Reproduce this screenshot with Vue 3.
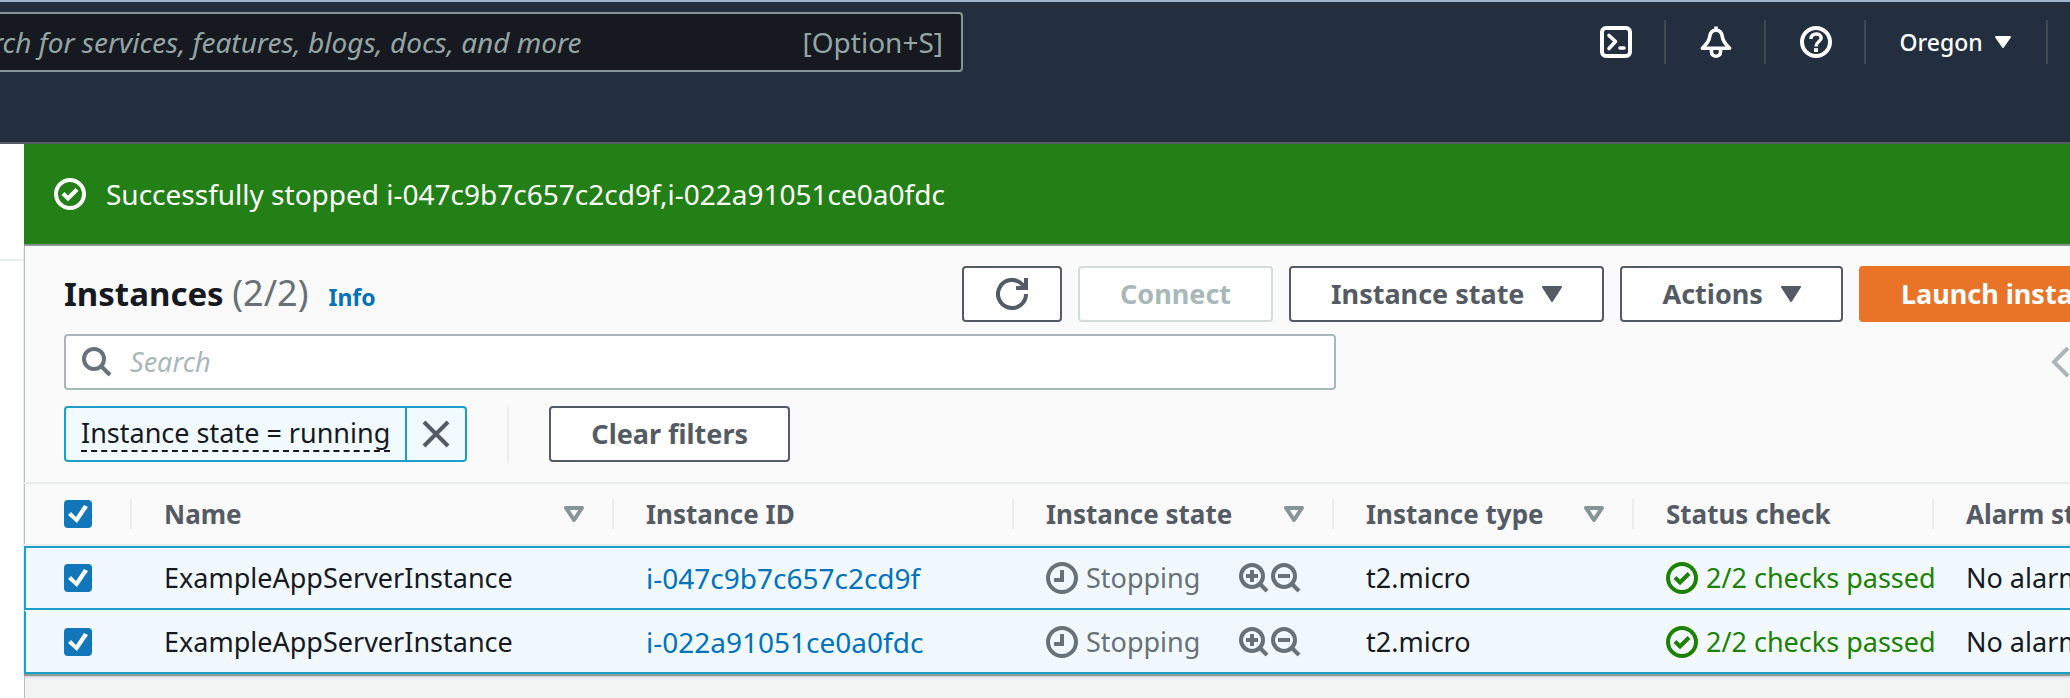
<script setup>
import { ref } from 'vue'

const columns = [
  { label: 'Name', cls: 'c-name', sort: true },
  { label: 'Instance ID', cls: 'c-id', sort: false },
  { label: 'Instance state', cls: 'c-state', sort: true },
  { label: 'Instance type', cls: 'c-type', sort: true },
  { label: 'Status check', cls: 'c-check', sort: false },
  { label: 'Alarm status', cls: 'c-alarm', sort: false },
]
const rows = ref([
  { id: 'i-047c9b7c657c2cd9f', name: 'ExampleAppServerInstance', selected: true },
  { id: 'i-022a91051ce0a0fdc', name: 'ExampleAppServerInstance', selected: true },
])
const all = ref(true)
</script>

<template>
  <div class="page">
    <header class="nav">
      <label class="nav-search">
        <input type="text" placeholder="Search for services, features, blogs, docs, and more" aria-label="Search for services" />
        <span class="hint">[Option+S]</span>
      </label>
      <div class="nav-tools">
        <button class="tool" type="button" aria-label="CloudShell">
          <svg width="32" height="32" viewBox="0 0 32 32" fill="none" stroke="#fff" stroke-width="4" stroke-linejoin="round">
            <rect x="2" y="2" width="28" height="28" rx="4" />
            <path d="M9 9.500L15.500 15.500L9 22.500" stroke-linecap="round" stroke-width="3.600" />
            <path d="M20 22h4" stroke-linecap="round" stroke-width="3.600" />
          </svg>
        </button>
        <button class="tool" type="button" aria-label="Notifications">
          <svg width="32" height="32" viewBox="0 0 32 32" fill="none" stroke="#fff" stroke-width="3.600" stroke-linejoin="round">
            <path d="M16 4.200C11.500 4.200 10 7.500 9.600 11C9 15.800 6 18.800 2.400 22.200H29.600C26 18.800 23 15.800 22.400 11C22 7.500 20.500 4.200 16 4.200Z" />
            <path d="M16 0.500V4" />
            <path d="M11.500 23V26C11.500 31.600 20.500 31.600 20.500 26V23" />
          </svg>
        </button>
        <button class="tool" type="button" aria-label="Help">
          <svg width="32" height="32" viewBox="0 0 32 32" fill="none" stroke="#fff" stroke-width="4">
            <circle cx="16" cy="16" r="14" />
            <path d="M11 13V12.500C11 6.500 21.200 6.500 21.200 12C21.200 15.500 16 15.800 16 20.500" stroke-width="3.400" />
            <path d="M16 22.200v3.800" />
          </svg>
        </button>
        <button class="tool region" type="button">
          Oregon
          <svg width="16" height="12" viewBox="0 0 16 12"><path d="M1 1H15L8 11Z" fill="#fff" stroke="#fff" stroke-width="2" stroke-linejoin="round" /></svg>
        </button>
      </div>
    </header>

    <div class="body">
      <aside class="side"><div class="side-line"></div></aside>
      <main class="main">
        <div class="flash" role="status">
          <svg width="32" height="32" viewBox="0 0 32 32" fill="none" stroke="#fff" stroke-width="4">
            <circle cx="16" cy="16" r="14" /><path d="M9 15.500L14 20.500L23 11.500" />
          </svg>
          <span>Successfully stopped i-047c9b7c657c2cd9f,i-022a91051ce0a0fdc</span>
        </div>

        <section class="panel">
          <div class="head">
            <div class="title">
              <h1>Instances <span>(2/2)</span></h1>
              <a href="#info">Info</a>
            </div>
            <div class="actions">
              <button class="btn icon-btn" type="button" aria-label="Refresh">
                <svg width="32" height="32" viewBox="0 0 32 32" fill="none" stroke="#545b64" stroke-width="4">
                  <path d="M30 16A14 14 0 1 1 26 6.200L29 9.500" /><path d="M30 0V10H20" />
                </svg>
              </button>
              <button class="btn" type="button" disabled>Connect</button>
              <button class="btn" type="button">
                Instance state
                <svg class="caret" width="20" height="16" viewBox="0 0 20 16"><path d="M1 1H19L10 15Z" fill="#545b64" stroke="#545b64" stroke-width="2" stroke-linejoin="round" /></svg>
              </button>
              <button class="btn" type="button">
                Actions
                <svg class="caret" width="20" height="16" viewBox="0 0 20 16"><path d="M1 1H19L10 15Z" fill="#545b64" stroke="#545b64" stroke-width="2" stroke-linejoin="round" /></svg>
              </button>
              <button class="btn primary" type="button">Launch instances</button>
            </div>
          </div>

          <div class="filter">
            <label class="search">
              <svg width="30" height="30" viewBox="0 0 30 30" fill="none" stroke="#687078" stroke-width="4">
                <circle cx="12" cy="12" r="10" /><path d="M19 19L28 28" />
              </svg>
              <input type="search" placeholder="Search" aria-label="Search instances" />
            </label>
            <button class="prev" type="button" aria-label="Previous page">
              <svg width="20" height="32" viewBox="0 0 20 32" fill="none" stroke="#aab7b8" stroke-width="4"><path d="M18 2L4 16L18 30" /></svg>
            </button>
          </div>

          <div class="tokens">
            <div class="token">
              <div class="token-text"><button type="button">Instance state = running</button></div>
              <button class="dismiss" type="button" aria-label="Remove filter">
                <svg width="28" height="28" viewBox="0 0 28 28" fill="none" stroke="#545b64" stroke-width="4"><path d="M2 2L26 26M26 2L2 26" /></svg>
              </button>
            </div>
            <div class="rule"></div>
            <button class="btn" type="button">Clear filters</button>
          </div>

          <table>
            <colgroup>
              <col class="c-box" />
              <col v-for="c in columns" :key="c.label" :class="c.cls" />
            </colgroup>
            <thead>
              <tr>
                <th class="box"><div class="th"><input v-model="all" type="checkbox" aria-label="Select all" /></div></th>
                <th v-for="c in columns" :key="c.label" scope="col">
                  <div class="th">
                    <span>{{ c.label }}</span>
                    <svg v-if="c.sort" width="20" height="16" viewBox="0 0 20 16" fill="none"><path d="M2 2H18L10 14Z" stroke="#879596" stroke-width="4" stroke-linejoin="round" /></svg>
                  </div>
                </th>
              </tr>
            </thead>
            <tbody>
              <tr v-for="r in rows" :key="r.id">
                <td class="box"><input v-model="r.selected" type="checkbox" :aria-label="'Select ' + r.id" /></td>
                <td>{{ r.name }}</td>
                <td class="id"><a :href="'#' + r.id">{{ r.id }}</a></td>
                <td>
                  <div class="cell state">
                    <svg width="32" height="32" viewBox="0 0 32 32" fill="none" stroke="#687078" stroke-width="4">
                      <circle cx="16" cy="16" r="14" /><path d="M16 8V18H8" />
                    </svg>
                    <span>Stopping</span>
                    <div class="zoom">
                      <button type="button" aria-label="Include this value">
                        <svg width="30" height="30" viewBox="0 0 30 30" fill="none" stroke="#687078" stroke-width="4">
                          <circle cx="13" cy="13" r="11" /><path d="M7 13H19M13 7V19M21 21L28 28" />
                        </svg>
                      </button>
                      <button type="button" aria-label="Exclude this value">
                        <svg width="30" height="30" viewBox="0 0 30 30" fill="none" stroke="#687078" stroke-width="4">
                          <circle cx="13" cy="13" r="11" /><path d="M7 13H19M21 21L28 28" />
                        </svg>
                      </button>
                    </div>
                  </div>
                </td>
                <td>t2.micro</td>
                <td class="clip">
                  <div class="cell passed">
                    <svg width="32" height="32" viewBox="0 0 32 32" fill="none" stroke="#1d8102" stroke-width="4">
                      <circle cx="16" cy="16" r="14" /><path d="M9 15.500L14 20.500L23 11.500" />
                    </svg>
                    <span>2/2 checks passed</span>
                  </div>
                </td>
                <td>No alarms</td>
              </tr>
            </tbody>
          </table>
        </section>
      </main>
    </div>
  </div>
</template>

<style>
html, body { margin: 0; background: #f2f3f3; }
</style>

<style scoped>
* { box-sizing: border-box; }
.page {
  min-height: 100vh;
  display: flex;
  flex-direction: column;
  overflow: hidden;
  font-family: "Noto Sans", "Open Sans", sans-serif;
  font-size: 27px;
  line-height: 40px;
  color: #16191f;
}
button, input { font: inherit; color: inherit; margin: 0; }
button { padding: 0; border: 0; background: none; white-space: nowrap; cursor: pointer; }
svg { display: block; flex: none; }
a { color: #0073bb; text-decoration: none; }

.nav {
  display: flex;
  align-items: flex-start;
  justify-content: space-between;
  height: 144px;
  background: #232f3e;
  border-top: 2px solid #a2b5cd;
  border-bottom: 2px solid #545b64;
}
.nav-search {
  display: flex;
  align-items: center;
  width: 1063px;
  height: 60px;
  margin: 10px 0 0 -100px;
  padding-right: 18px;
  background: #16191f;
  border: 2px solid #879596;
  border-radius: 4px;
  color: #95a5a6;
  font-size: 28px;
}
.nav-search input { flex: 1; min-width: 0; padding: 0 0 0 46px; border: 0; outline: 0; background: none; }
.nav-search input::placeholder { color: #95a5a6; font-style: italic; opacity: 1; }
.nav-tools { display: flex; padding-top: 18px; margin-right: 22px; }
.tool {
  display: flex;
  align-items: center;
  justify-content: center;
  width: 100px;
  height: 44px;
  padding-left: 2px;
  border-right: 2px solid #414750;
}
.region { width: 182px; gap: 12px; padding: 0 2px 0 0; font-size: 23px; font-weight: 500; color: #fff; }

.body { flex: 1; display: flex; }
.side { flex: none; width: 24px; padding-top: 115px; background: #fff; box-shadow: 1px 0 0 #b5bdbd; }
.side-line { height: 2px; background: #eaeded; }
.main { flex: 1; min-width: 0; }
.flash {
  display: flex;
  align-items: center;
  gap: 20px;
  height: 102px;
  padding: 0 30px;
  background: #238016;
  border-bottom: 2px solid #879596;
  color: #fff;
  font-size: 28px;
}
.panel {
  background: #fafafa;
  border-bottom: 2px solid #8d9999;
  box-shadow: inset 1px 0 0 #b5bdbd, 0 1px 2px #c4cbcb;
}
.head { display: flex; align-items: center; padding: 20px 0 12px 40px; }
.title { flex: none; width: 898px; display: flex; align-items: baseline; gap: 20px; }
.title h1 { margin: 0; font-size: 33px; line-height: 44px; font-weight: 700; }
.title h1 span { font-size: 36px; font-weight: 400; color: #687078; }
.title a { font-size: 23px; font-weight: 700; }
.actions { display: flex; gap: 16px; }
.btn {
  display: flex;
  flex: none;
  align-items: center;
  justify-content: center;
  gap: 18px;
  height: 56px;
  padding: 0 40px;
  background: #fff;
  border: 2px solid #545b64;
  border-radius: 4px;
  color: #545b64;
  font-weight: 700;
}
.btn:disabled { border-color: #d5dbdb; color: #aab7b8; }
.icon-btn { padding: 0 32px; }
.primary { background: #e97327; border-color: #e97327; color: #fff; }

.filter { display: flex; align-items: center; justify-content: space-between; padding-left: 40px; }
.search {
  display: flex;
  align-items: center;
  gap: 18px;
  width: 1272px;
  height: 56px;
  padding: 0 16px;
  background: #fff;
  border: 2px solid #aab7b8;
  border-radius: 4px;
}
.search input { flex: 1; min-width: 0; padding: 0; border: 0; outline: 0; background: none; }
.search input::placeholder { color: #aab7b8; font-style: italic; opacity: 1; }

.tokens { display: flex; align-items: stretch; padding: 16px 0 20px 40px; }
.token {
  display: flex;
  height: 56px;
  background: #f1faff;
  border: 2px solid #1a9fc6;
  border-radius: 4px;
}
.token-text { display: flex; align-items: center; padding: 0 15px; border-right: 2px solid #1a9fc6; }
.token-text button { line-height: 34px; border-bottom: 2px dashed #16191f; }
.dismiss { display: flex; align-items: center; justify-content: center; width: 58px; }
.rule { width: 2px; margin: 0 40px; background: #eaeded; }

table { width: 100%; border-collapse: separate; border-spacing: 0; table-layout: fixed; border-top: 2px solid #eaeded; }
.c-box { width: 108px; }
.c-name { width: 482px; }
.c-id { width: 400px; }
.c-state { width: 320px; }
.c-type, .c-check { width: 300px; }
th { padding: 15px 0; text-align: left; font-size: 26px; color: #545b64; border-bottom: 2px solid #eaeded; }
.th {
  display: flex;
  align-items: center;
  justify-content: space-between;
  height: 30px;
  padding: 0 28px 0 32px;
  border-right: 2px solid #eaeded;
  white-space: nowrap;
}
.box .th { padding-left: 40px; }
th:last-child .th { border-right: 0; }
td {
  height: 64px;
  padding: 0 0 0 32px;
  background: #f1f9ff;
  border-top: 2px solid #f1f9ff;
  border-bottom: 2px solid #1a9fc6;
  white-space: nowrap;
}
tbody tr:first-child td { border-top-color: #1a9fc6; }
td.box { padding-left: 38px; border-left: 2px solid #1a9fc6; }
.id { font-size: 28px; }
input[type="checkbox"] {
  appearance: none;
  display: block;
  width: 28px;
  height: 28px;
  background: #fff;
  border: 2px solid #879596;
  border-radius: 4px;
}
input[type="checkbox"]:checked { background: #1276ba; border-color: #1276ba; }
input[type="checkbox"]:checked::before {
  content: "";
  display: block;
  width: 24px;
  height: 24px;
  background: #fff;
  clip-path: polygon(2px 13px, 5px 10px, 10px 15px, 18px 3px, 22px 5px, 11px 21px);
}
.clip { overflow: hidden; }
.cell { display: flex; align-items: center; }
.state { gap: 8px; color: #687078; }
.zoom { display: flex; gap: 2px; margin-left: auto; padding-right: 33px; }
.passed { gap: 8px; color: #1d8102; }
</style>
